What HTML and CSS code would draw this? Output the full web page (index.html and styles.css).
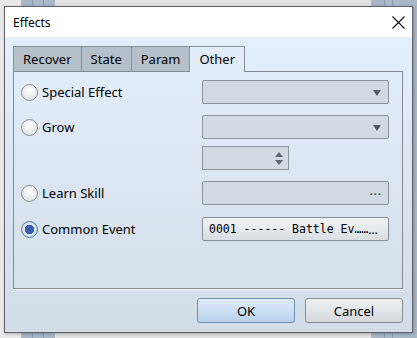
FILE: index.html
```html
<!DOCTYPE html>
<html lang="en">
<head>
    <meta charset="UTF-8">
    <title>Effects</title>
    <link rel="stylesheet" href="styles.css">
</head>
<body>
    <!-- Dialog -->
    <div class="dialog">
        <div class="titlebar">
            <span class="title">Effects</span>
            <svg class="close" width="13" height="13" viewBox="0 0 13 13">
                <path d="M0.5 0.5L12.5 12.5M12.5 0.5L0.5 12.5" stroke="#111" stroke-width="1.1" fill="none"/>
            </svg>
        </div>

        <div class="client">
            <div class="tabs">
                <div class="tab">Recover</div>
                <div class="tab">State</div>
                <div class="tab">Param</div>
                <div class="tab active">Other</div>
            </div>

            <div class="pane">
                <div class="row row-special">
                    <label class="radio"><span class="knob"></span>Special Effect</label>
                    <div class="combo"><span class="arrow"></span></div>
                </div>
                <div class="row row-grow">
                    <label class="radio"><span class="knob"></span>Grow</label>
                    <div class="combo"><span class="arrow"></span></div>
                </div>
                <div class="row row-spin">
                    <div class="spin">
                        <span class="spin-up"></span>
                        <span class="spin-down"></span>
                    </div>
                </div>
                <div class="row row-skill">
                    <label class="radio"><span class="knob"></span>Learn Skill</label>
                    <div class="picker"><span class="dots">···</span></div>
                </div>
                <div class="row row-event">
                    <label class="radio"><span class="knob checked"></span>Common Event</label>
                    <div class="event-btn">0001 ------ Battle Ev……<span class="more">…</span></div>
                </div>
            </div>

            <div class="buttons">
                <button class="btn btn-default">OK</button>
                <button class="btn">Cancel</button>
            </div>
        </div>
    </div>
</body>
</html>
```

FILE: styles.css
```css
html, body {
    margin: 0;
    padding: 0;
    width: 417px;
    height: 338px;
    overflow: hidden;
}

/* Editor window behind the dialog */
body {
    font-family: "Noto Sans", "Open Sans", sans-serif;
    background:
        linear-gradient(90deg,
            transparent 0 32px, #8d9aab 32px 33px, transparent 33px 43px, #8d9aab 43px 44px,
            transparent 44px 384px, #8d9aab 384px 385px, transparent 385px 392px, #8d9aab 392px 393px, transparent 393px),
        linear-gradient(90deg,
            #e9e9e9 0 21px, #aab7c7 21px 55px, #e2e2e2 55px 371px, #aab7c7 371px);
    padding: 6px 0 0 4px;
    box-sizing: border-box;
}

.dialog {
    width: 409px;
    height: 327px;
    border: 1px solid #5f6368;
    box-sizing: border-box;
    background: #fff;
    box-shadow: 1px 1px 3px rgba(0, 0, 0, 0.25);
    display: flex;
    flex-direction: column;
}

.titlebar {
    height: 30px;
    display: flex;
    align-items: center;
    justify-content: space-between;
    padding: 0 7px 0 8px;
    background: #fff;
}

.title {
    font-size: 12px;
    color: #000;
}

.close {
    display: block;
    margin-top: 1px;
}

.client {
    flex: 1;
    background: linear-gradient(#e4effc, #d3dde7);
    padding: 9px 9px 8px 8px;
    display: flex;
    flex-direction: column;
}

/* Tabs */
.tabs {
    display: flex;
    height: 25px;
    position: relative;
    z-index: 1;
}

.tab {
    height: 25px;
    box-sizing: border-box;
    padding: 0 9px;
    border: 1px solid #8a9097;
    border-bottom: none;
    border-left: none;
    background: #b6c0ca;
    font-size: 13px;
    color: #000;
    display: flex;
    align-items: center;
}

.tab:first-child {
    border-left: 1px solid #8a9097;
}

.tab.active {
    height: 26px;
    background: #e2edf9;
    padding: 0 9px 1px;
}

.pane {
    height: 218px;
    box-sizing: border-box;
    border: 1px solid #858b92;
    box-shadow: 0 1px 0 #f4f8fc;
    padding: 8px 12px 0 7px;
    display: flex;
    flex-direction: column;
}

.row {
    display: flex;
    align-items: center;
    height: 24px;
}

.row-grow  { margin-top: 11px; }
.row-spin  { margin-top: 7px; padding-left: 181px; }
.row-skill { margin-top: 11px; }
.row-event { margin-top: 12px; }

/* Radio buttons */
.radio {
    width: 181px;
    display: flex;
    align-items: center;
    font-size: 13px;
    color: #000;
}

.knob {
    width: 17px;
    height: 17px;
    box-sizing: border-box;
    border: 1px solid #8b8e91;
    border-radius: 50%;
    background: radial-gradient(circle at 50% 35%, #ffffff, #e4e7ea 70%, #d0d4d8);
    margin-right: 4px;
    flex: none;
}

.knob.checked {
    border-color: #4b7fb5;
    background: radial-gradient(circle, #3b5fae 0 4.5px, #dde8f4 5px 6px, #c7d7e9 7px);
}

/* Inputs */
.combo, .picker {
    width: 187px;
    height: 24px;
    box-sizing: border-box;
    border: 1px solid #8d939a;
    border-radius: 2px;
    background: #d2dbe4;
    display: flex;
    align-items: center;
    justify-content: flex-end;
    padding-right: 7px;
}

.arrow {
    width: 0;
    height: 0;
    border-left: 4px solid transparent;
    border-right: 4px solid transparent;
    border-top: 6px solid #555d67;
    margin-top: 1px;
}

.dots {
    font-size: 11px;
    letter-spacing: 1px;
    color: #3f4650;
    font-weight: bold;
    margin-right: -1px;
}

.spin {
    width: 87px;
    height: 24px;
    box-sizing: border-box;
    border: 1px solid #8d939a;
    background: #d2dbe4;
    display: flex;
    flex-direction: column;
    align-items: flex-end;
    justify-content: center;
    gap: 3px;
    padding-right: 5px;
}

.spin-up, .spin-down {
    width: 0;
    height: 0;
    border-left: 4px solid transparent;
    border-right: 4px solid transparent;
}

.spin-up   { border-bottom: 5px solid #5e6671; }
.spin-down { border-top: 5px solid #5e6671; }

.event-btn {
    width: 187px;
    height: 24px;
    box-sizing: border-box;
    border: 1px solid #898f96;
    border-radius: 2px;
    background: linear-gradient(#f2f4f7, #d9dee4);
    font-family: "DejaVu Sans Mono", monospace;
    font-size: 11.5px;
    color: #000;
    display: flex;
    align-items: center;
    padding-left: 6px;
    white-space: nowrap;
    overflow: hidden;
}

.more {
    font-family: "Noto Sans", sans-serif;
    font-size: 12px;
}

/* Bottom buttons */
.buttons {
    margin-top: 9px;
    display: flex;
    justify-content: flex-end;
    gap: 10px;
}

.btn {
    width: 98px;
    height: 25px;
    margin: 0;
    padding: 0;
    border: 1px solid #878c93;
    border-radius: 3px;
    background: linear-gradient(#f0f2f4, #d4d8dd);
    font-family: "Noto Sans", "Open Sans", sans-serif;
    font-size: 13px;
    color: #000;
}

.btn-default {
    border-color: #6f8fb3;
    background: linear-gradient(#dfecf9, #bad2ed);
}
```
